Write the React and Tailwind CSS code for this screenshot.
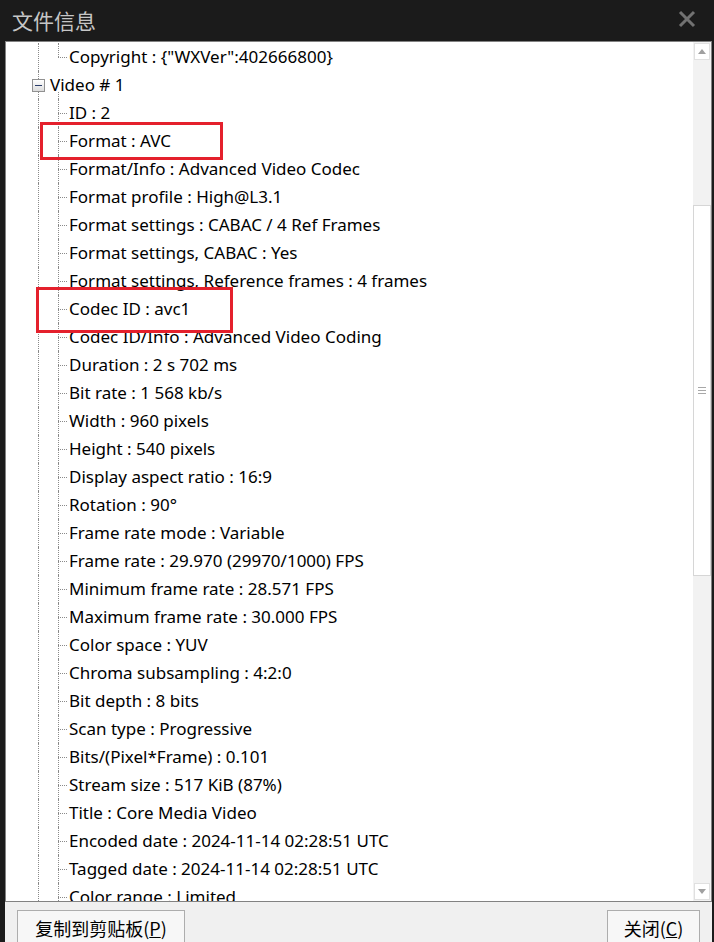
import React from 'react';

const rows = [
  { text: 'Copyright : {"WXVer":402666800}', level: 1, last: true },
  { text: 'Video # 1', level: 0 },
  { text: 'ID : 2', level: 1 },
  { text: 'Format : AVC', level: 1 },
  { text: 'Format/Info : Advanced Video Codec', level: 1 },
  { text: 'Format profile : High@L3.1', level: 1 },
  { text: 'Format settings : CABAC / 4 Ref Frames', level: 1 },
  { text: 'Format settings, CABAC : Yes', level: 1 },
  { text: 'Format settings, Reference frames : 4 frames', level: 1 },
  { text: 'Codec ID : avc1', level: 1 },
  { text: 'Codec ID/Info : Advanced Video Coding', level: 1 },
  { text: 'Duration : 2 s 702 ms', level: 1 },
  { text: 'Bit rate : 1 568 kb/s', level: 1 },
  { text: 'Width : 960 pixels', level: 1 },
  { text: 'Height : 540 pixels', level: 1 },
  { text: 'Display aspect ratio : 16:9', level: 1 },
  { text: 'Rotation : 90°', level: 1 },
  { text: 'Frame rate mode : Variable', level: 1 },
  { text: 'Frame rate : 29.970 (29970/1000) FPS', level: 1 },
  { text: 'Minimum frame rate : 28.571 FPS', level: 1 },
  { text: 'Maximum frame rate : 30.000 FPS', level: 1 },
  { text: 'Color space : YUV', level: 1 },
  { text: 'Chroma subsampling : 4:2:0', level: 1 },
  { text: 'Bit depth : 8 bits', level: 1 },
  { text: 'Scan type : Progressive', level: 1 },
  { text: 'Bits/(Pixel*Frame) : 0.101', level: 1 },
  { text: 'Stream size : 517 KiB (87%)', level: 1 },
  { text: 'Title : Core Media Video', level: 1 },
  { text: 'Encoded date : 2024-11-14 02:28:51 UTC', level: 1 },
  { text: 'Tagged date : 2024-11-14 02:28:51 UTC', level: 1 },
  { text: 'Color range : Limited', level: 1 },
];

function Row({ row }) {
  return (
    <div className="relative h-7 flex items-center">
      {/* root level vertical line */}
      <div className="absolute left-[32px] top-0 bottom-0 border-l border-dotted border-[#8a8a8a]" />
      {row.level === 1 ? (
        <>
          <div
            className={
              'absolute left-[52px] top-0 border-l border-dotted border-[#8a8a8a] ' +
              (row.last ? 'h-[14px]' : 'bottom-0')
            }
          />
          <div className="absolute left-[52px] top-[14px] w-[9px] border-t border-dotted border-[#8a8a8a]" />
          <span className="pl-[63px] whitespace-nowrap">{row.text}</span>
        </>
      ) : (
        <>
          <div className="absolute left-[26px] top-[8px] w-[13px] h-[13px] border border-[#919191] bg-gradient-to-b from-white to-[#dcdcdc] flex items-center justify-center">
            <div className="w-[7px] h-[1px] bg-[#2b3e6b]" />
          </div>
          <div className="absolute left-[52px] top-[21px] bottom-0 border-l border-dotted border-[#8a8a8a]" />
          <span className="pl-[44px] whitespace-nowrap">{row.text}</span>
        </>
      )}
    </div>
  );
}

export default function App() {
  return (
    <div className="w-[714px] h-[942px] bg-[#1b1b1b] flex flex-col overflow-hidden" style={{ fontFamily: '"Noto Sans", "Noto Sans CJK SC", sans-serif' }}>
      <div className="h-[41px] shrink-0 flex items-center justify-between pl-[12px] pr-[18px]">
        <span className="text-[21px] text-[#c6c6c6]" style={{ fontFamily: '"Noto Sans CJK SC", sans-serif' }}>
          文件信息
        </span>
        <svg width="18" height="18" viewBox="0 0 18 18" className="mb-[4px]">
          <path d="M2 2 L16 16 M16 2 L2 16" stroke="#727272" strokeWidth="3" />
        </svg>
      </div>
      <div className="flex-1 flex flex-col pl-[5px] pr-[2px]">
        <div className="h-[861px] shrink-0 bg-white border border-[#828282] flex">
          <div className="relative flex-1 overflow-hidden pt-[1px] text-[17px] text-black">
            {rows.map((r, i) => (
              <Row key={i} row={r} />
            ))}
            <div className="absolute left-[34px] top-[80px] w-[183px] h-[38px] border-[3px] border-[#e4202c]" />
            <div className="absolute left-[30px] top-[245px] w-[197px] h-[46px] border-[3px] border-[#e4202c]" />
          </div>
          <div className="w-[18px] shrink-0 bg-[#f2f2f2] flex flex-col">
            <div className="h-[17px] mt-[1px] mx-[1px] bg-white border border-[#e0e0e0] flex items-center justify-center">
              <svg width="8" height="5" viewBox="0 0 8 5">
                <path d="M0 5 L4 0 L8 5 Z" fill="#a0a0a0" />
              </svg>
            </div>
            <div className="h-[145px]" />
            <div className="h-[371px] bg-white border border-[#d6d6d6] flex flex-col items-center justify-center gap-[2px]">
              <div className="w-[8px] h-[1px] bg-[#a8a8a8]" />
              <div className="w-[8px] h-[1px] bg-[#a8a8a8]" />
              <div className="w-[8px] h-[1px] bg-[#a8a8a8]" />
            </div>
            <div className="flex-1" />
            <div className="h-[17px] mb-[1px] mx-[1px] bg-white border border-[#e0e0e0] flex items-center justify-center">
              <svg width="8" height="5" viewBox="0 0 8 5">
                <path d="M0 0 L4 5 L8 0 Z" fill="#a0a0a0" />
              </svg>
            </div>
          </div>
        </div>
        <div className="flex-1 bg-[#f0f0f0] flex items-start justify-between pl-[12px] pr-[12px] pt-[8px]">
          <button className="w-[168px] h-[36px] bg-[#f7f7f7] border border-[#adadad] text-[18px] text-black flex items-center justify-center" style={{ fontFamily: '"Noto Sans CJK SC", sans-serif' }}>
            复制到剪贴板(<span className="underline">P</span>)
          </button>
          <button className="w-[93px] h-[36px] bg-[#f7f7f7] border border-[#adadad] text-[18px] text-black flex items-center justify-center" style={{ fontFamily: '"Noto Sans CJK SC", sans-serif' }}>
            关闭(<span className="underline">C</span>)
          </button>
        </div>
      </div>
    </div>
  );
}
